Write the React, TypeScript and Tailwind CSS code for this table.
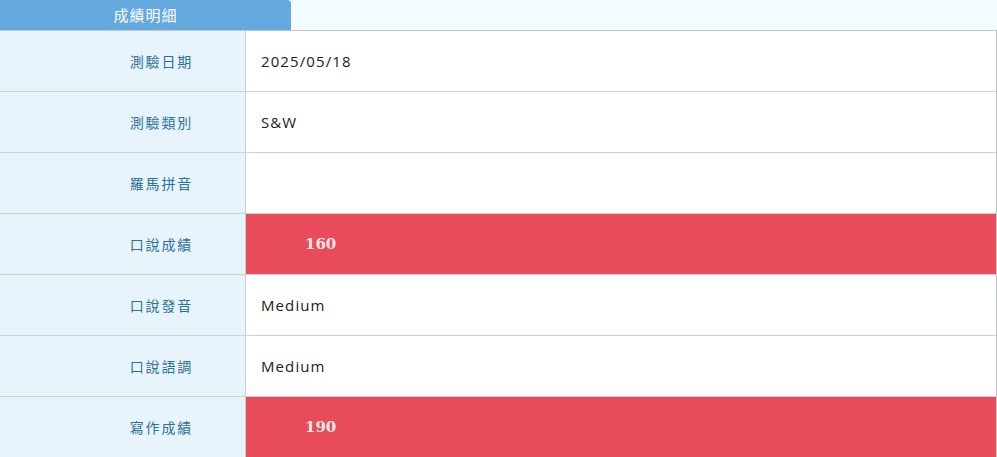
import React from "react";

type Row = { label: string; value: string; score?: boolean };

const rows: Row[] = [
  { label: "測驗日期", value: "2025/05/18" },
  { label: "測驗類別", value: "S&W" },
  { label: "羅馬拼音", value: "" },
  { label: "口說成績", value: "160", score: true },
  { label: "口說發音", value: "Medium" },
  { label: "口說語調", value: "Medium" },
  { label: "寫作成績", value: "190", score: true },
];

function ResultRow({ row }: { row: Row }) {
  return (
    <div className="flex h-[61px] border-b border-[#d0d0d0]">
      <div className="w-[246px] shrink-0 flex items-center justify-end pr-[52px] bg-[#e8f4fc] border-r border-[#c8ccd0] text-[14px] tracking-[1.8px] text-[#2b719c] font-['Noto_Sans_CJK_TC',sans-serif]">
        {row.label}
      </div>
      {row.score ? (
        <div className="flex-1 flex items-center pl-[59px] bg-[#e84c5a] text-[#fbe6e8] text-[15px] font-bold font-['DejaVu_Serif',serif]">
          {row.value}
        </div>
      ) : (
        <div className="flex-1 flex items-center pl-[15px] bg-white text-[15px] tracking-[1.1px] text-[#222] font-['Open_Sans',sans-serif]">
          {row.value}
        </div>
      )}
    </div>
  );
}

export default function App() {
  return (
    <div className="w-[997px] h-[457px] overflow-hidden bg-[#f2fbff]">
      <div className="h-[30px] flex">
        <div className="w-[291px] flex items-center justify-center rounded-tr-[4px] bg-[#64a9de] text-white text-[15px] tracking-[1px] font-['Noto_Sans_CJK_TC',sans-serif]">
          成績明細
        </div>
      </div>
      <div className="w-[997px] border-t border-r border-[#c0c4c8] bg-white">
        {rows.map((row) => (
          <ResultRow key={row.label} row={row} />
        ))}
      </div>
    </div>
  );
}
